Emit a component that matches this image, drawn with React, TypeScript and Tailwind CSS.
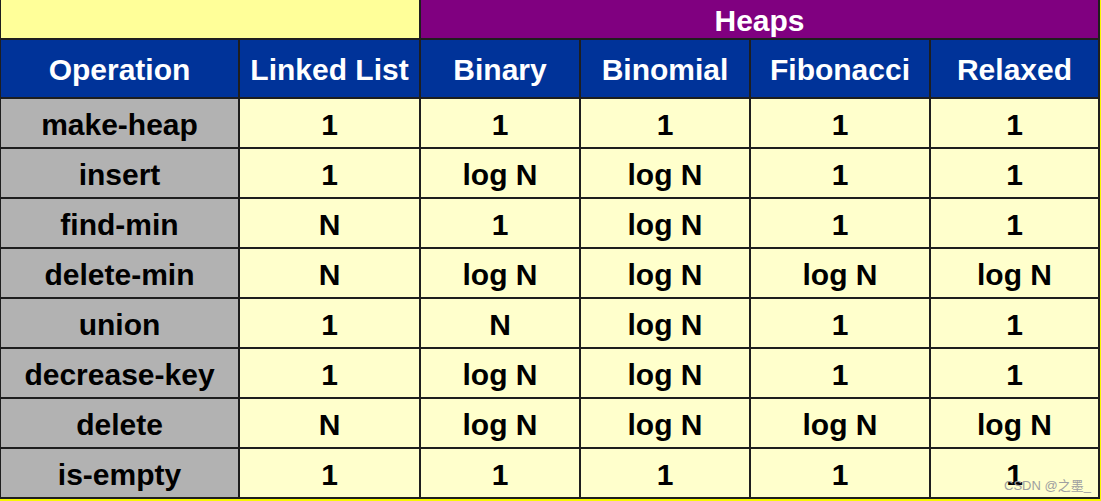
import React from "react";

const rows: string[][] = [
  ["make-heap", "1", "1", "1", "1", "1"],
  ["insert", "1", "log N", "log N", "1", "1"],
  ["find-min", "N", "1", "log N", "1", "1"],
  ["delete-min", "N", "log N", "log N", "log N", "log N"],
  ["union", "1", "N", "log N", "1", "1"],
  ["decrease-key", "1", "log N", "log N", "1", "1"],
  ["delete", "N", "log N", "log N", "log N", "log N"],
  ["is-empty", "1", "1", "1", "1", "1"],
];

const heads = ["Operation", "Linked List", "Binary", "Binomial", "Fibonacci", "Relaxed"];

export default function App() {
  return (
    <div className="relative w-[1101px] h-[501px] bg-[#f7f700] overflow-hidden font-['Liberation_Sans',Arial,sans-serif] font-bold">
      <div className="w-[1100px] bg-[#1e1e1e] pl-px pr-[2px] pb-[2px]">
        <div className="grid grid-cols-[237px_179px_158px_168px_178px_167px] grid-rows-[38px_57px_repeat(8,48px)] gap-[2px]">
          <div className="col-span-2 bg-[#ffff99]" />
          <div className="col-span-4 bg-[#800080] flex items-center justify-center text-white text-[30px] leading-none pt-[3px]">
            Heaps
          </div>
          {heads.map((h) => (
            <div
              key={h}
              className="bg-[#003399] flex items-center justify-center text-white text-[30px] leading-none pt-[3px]"
            >
              {h}
            </div>
          ))}
          {rows.map((r, i) =>
            r.map((c, j) => (
              <div
                key={i + "-" + j}
                className={
                  "flex items-center justify-center text-black text-[30px] leading-none pt-[3px] " +
                  (j === 0 ? "bg-[#b2b2b2]" : "bg-[#ffffcc]")
                }
              >
                {c}
              </div>
            ))
          )}
        </div>
      </div>
      <div className="absolute left-[1004px] top-[478px] text-[13px] leading-[16px] font-normal text-[#a0a0a0] font-['Liberation_Sans','Noto_Sans_CJK_SC',sans-serif] whitespace-nowrap">
        CSDN @之墨_
      </div>
    </div>
  );
}
